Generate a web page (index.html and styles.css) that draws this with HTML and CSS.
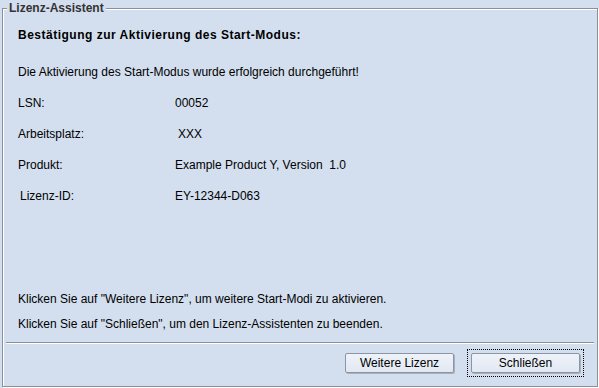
FILE: index.html
```html
<!DOCTYPE html>
<html lang="de">
<head>
<meta charset="utf-8">
<link rel="stylesheet" href="styles.css">
</head>
<body>
<div class="panel">
  <span class="title">Lizenz-Assistent</span>
  <div class="content">
    <div class="heading">Bestätigung zur Aktivierung des Start-Modus:</div>
    <div class="msg">Die Aktivierung des Start-Modus wurde erfolgreich durchgeführt!</div>
    <div class="rows">
      <div class="row"><span class="label">LSN:</span><span class="value">00052</span></div>
      <div class="row"><span class="label">Arbeitsplatz:</span><span class="value ws">XXX</span></div>
      <div class="row"><span class="label">Produkt:</span><span class="value">Example Product Y, Version&nbsp; 1.0</span></div>
      <div class="row"><span class="label lid">Lizenz-ID:</span><span class="value">EY-12344-D063</span></div>
    </div>
    <div class="spacer"></div>
    <div class="hint">Klicken Sie auf "Weitere Lizenz", um weitere Start-Modi zu aktivieren.</div>
    <div class="hint">Klicken Sie auf "Schließen", um den Lizenz-Assistenten zu beenden.</div>
  </div>
  <div class="sep"></div>
  <div class="buttons">
    <button class="btn">Weitere Lizenz</button>
    <span class="focus"><button class="btn">Schließen</button></span>
  </div>
</div>
</body>
</html>
```
FILE: styles.css
```css
html, body {
  margin: 0;
  padding: 0;
  background: #d3dfef;
  width: 599px;
  height: 388px;
  overflow: hidden;
  font-family: "Liberation Sans", Arial, sans-serif;
  font-size: 12px;
  color: #000;
}
.panel {
  position: relative;
  box-sizing: border-box;
  margin: 8px 1px 0 2px;
  height: 379px;
  border: 1px solid #8a9098;
  box-shadow: inset 1px 1px 0 #fff, 1px 1px 0 #fff;
  display: flex;
  flex-direction: column;
}
.title {
  position: absolute;
  top: -8px;
  left: 4px;
  padding: 0 2px;
  background: #d3dfef;
  font-weight: bold;
  color: #333;
  line-height: 14px;
}
.content {
  flex: 1;
  display: flex;
  flex-direction: column;
  padding: 19px 0 0 15px;
  line-height: 14px;
}
.heading {
  font-weight: bold;
  letter-spacing: 0.5px;
}
.msg {
  margin-top: 23px;
}
.rows {
  margin-top: 17px;
  display: flex;
  flex-direction: column;
  gap: 17px;
}
.row {
  display: flex;
}
.label {
  width: 157px;
}
.lid { padding-left: 2px; width: 155px; }
.ws { padding-left: 3px; }
.spacer { flex: 1; }
.hint {
  margin-bottom: 11px;
}
.sep {
  height: 1px;
  margin: 0 3px;
  background: #8a9098;
  border-bottom: 1px solid #fff;
}
.buttons {
  display: flex;
  justify-content: flex-end;
  align-items: center;
  gap: 13px;
  padding: 5px 13px 9px 0;
}
.btn {
  box-sizing: border-box;
  width: 109px;
  height: 20px;
  margin: 0;
  padding: 0;
  font-family: "Liberation Sans", Arial, sans-serif;
  font-size: 12px;
  color: #000;
  background: linear-gradient(#eef2f9, #e2e8f3);
  border: 1px solid #8b95a3;
  border-radius: 2px;
  box-shadow: 1px 1px 0 #a8b0bc;
}
.focus {
  display: block;
  padding: 3px;
  border: 1px dotted #000;
}
```
